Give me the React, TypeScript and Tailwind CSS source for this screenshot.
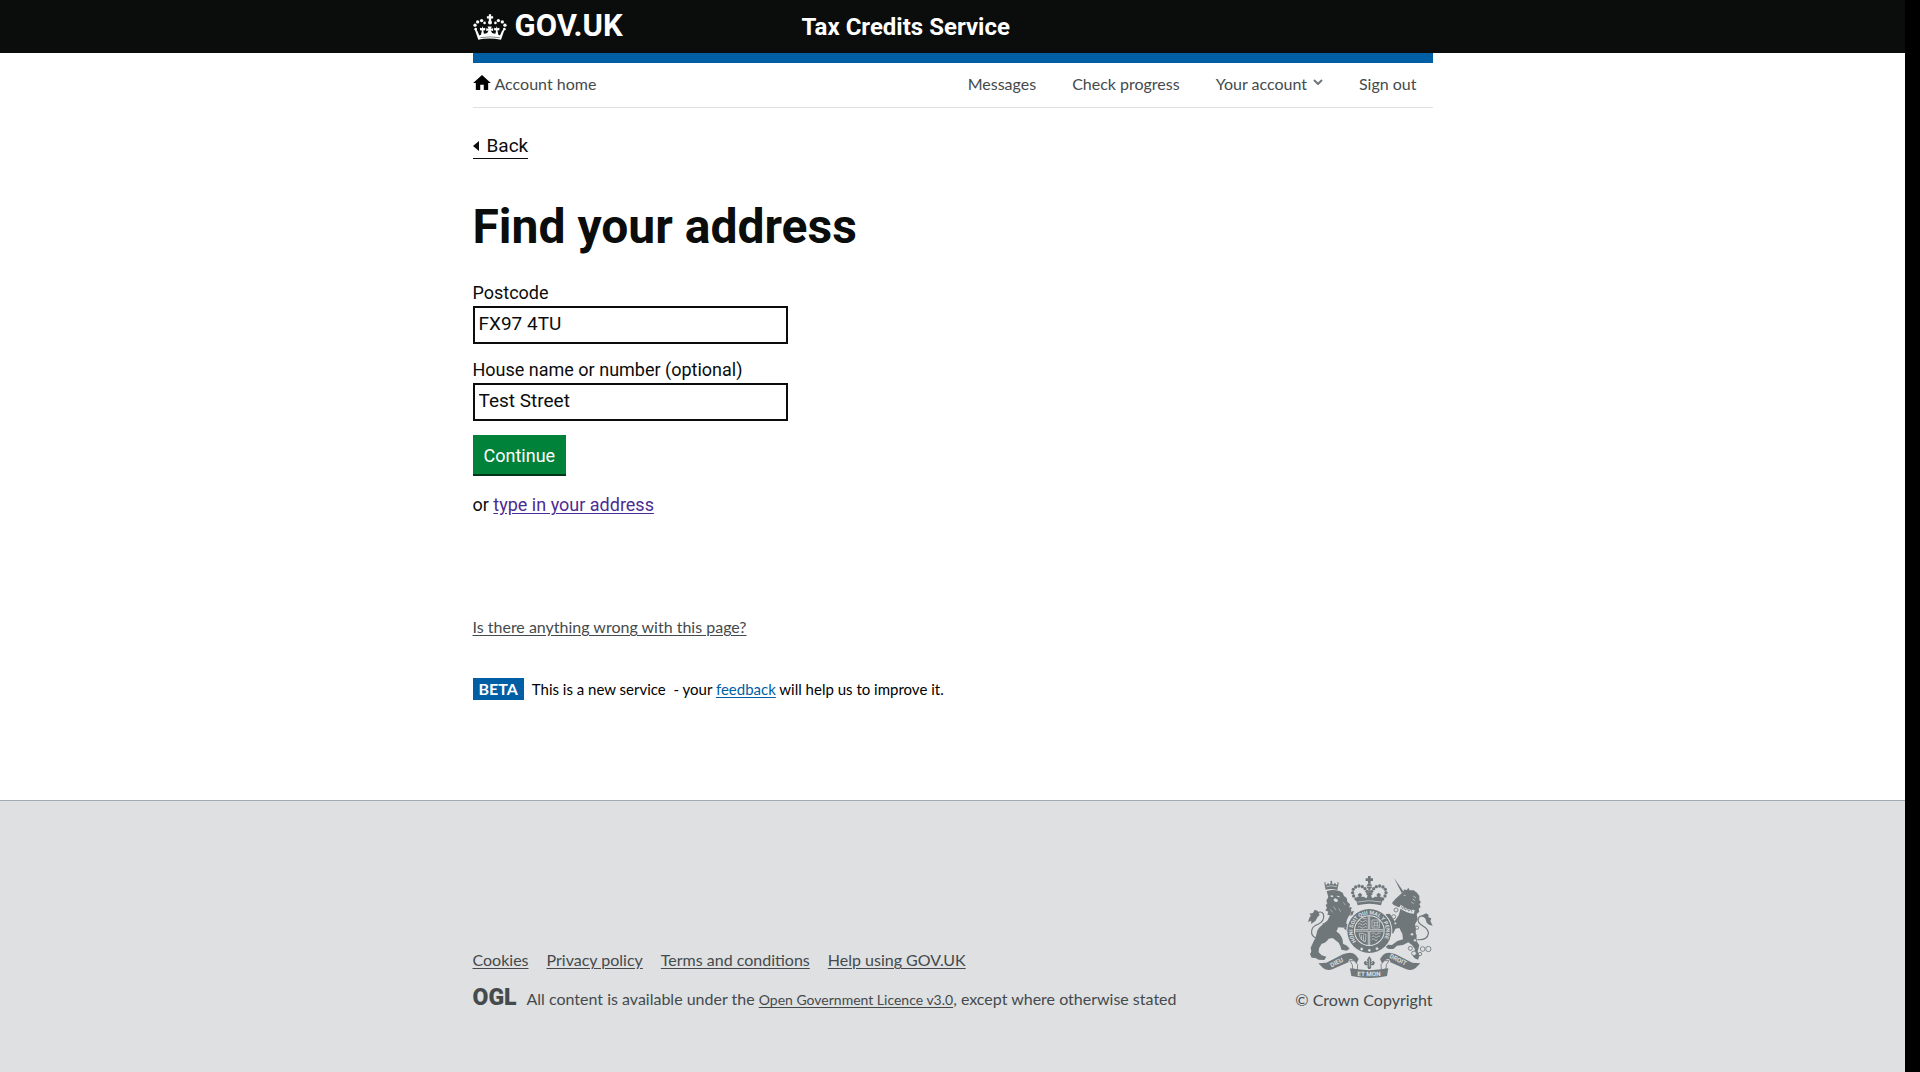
import React from 'react';
import type { ReactNode } from 'react';

function CrownLogo() {
  const left: [number, number, number][] = [
    [28, 56, 5], [36, 46, 5], [48, 42, 5], [57, 49, 4], [30, 68, 4],
  ];
  return (
    <svg viewBox="22 22 103 79" className="h-[26px] w-[34px] shrink-0" fill="#fff" aria-hidden="true">
      {left.map(([x, y, r]) => (
        <g key={`${x}-${y}`}>
          <circle cx={x} cy={y} r={r} />
          <circle cx={147 - x} cy={y} r={r} />
        </g>
      ))}
      <path d="M70 23h7v6h6v7h-6v7h-7v-7h-6v-7h6z" />
      <circle cx="73.500" cy="48" r="6" />
      <path d="M38 100l-10-29q5-2 8 4l5 12 5-2 3-13-6-1v-7l6 1 2-6 2 6 6-1v7l-6 1 2 10 5-1q7-1 9-9l-7 2v-9l7 2-3-7h13l-3 7 7-2v9l-7-2q2 8 9 9l5 1 2-10-6-1v-7l6 1 2-6 2 6 6-1v7l-6 1 3 13 5 2 5-12q3-6 8-4l-10 29q-36-7-71 0z" />
      <path d="M44 94q30-5 59 0" fill="none" stroke="#0b0c0c" strokeWidth="1.500" />
    </svg>
  );
}

function Lion() {
  return (
    <g>
      <path d="M137 92l-4-19 7 5 4-7 5 6 5-9 5 9 6-6 4 7 7-5-4 20q-20-6-35-1z" />
      <circle cx="154" cy="68" r="3" />
      <circle cx="135" cy="72" r="2.500" />
      <circle cx="174" cy="72" r="2.500" />
      <path d="M139 83q15-5 32 0" fill="none" stroke="#dee0e2" strokeWidth="2" />
      <path d="M140 97q18-8 38-1l10 5 4 10 8 6 2 11 8 8-2 9 6 9-3 12q-12 14-12 28l7 3 8 4 5 9-2 12-9-5-8-1-9-9-15-2-7 12q10 6 16 18 5 10 4 19l12 6 8 9-9 6-16-3-2-9-6-12-18-14-12 2q-9 13-21 15l-8 14-1 12 9 9 14 4-6 10-17-1-10-5-11-1-5-10 4-9-2-11 9-19q8-12 9-24 2-14 13-22l20-17 7-15-8-2 3-9-9-4 5-7-4-8 5-6-3-8 6-11z" />
      <path d="M137 200l-11-5 7-3M128 222l-12 0 5 7M112 268l-9-3 3 12M213 158l9-3-4 12-7 4zM210 143l7 5-9 4z" />
      <path d="M150 110l8-1 2 4-5 2zM170 110l7 1 3 4-7-1zM160 121l7-3 7 5-2 6-8-1z" fill="#dee0e2" />
      <path d="M160 142l8 11M176 148l6 10M151 151l7 9M190 130l6 8M194 206l-22 2" fill="none" stroke="#dee0e2" strokeWidth="1.500" />
      <path d="M121 239q-32-3-25-28 3-9 18-15 19-9 17-27-2-13-16-9-13 5-8 18" fill="none" stroke="#6f777b" strokeWidth="3.500" />
      <path d="M113 156l-9-4-5 10-11 2 5 6-4 5-5 14 10-4-1 10 13-9 7-12 6-6z" />
    </g>
  );
}

function Unicorn() {
  return (
    <g>
      <path d="M342 57l28 40-5 5z" />
      <path d="M365 103l9-12 6 3 5-8 4 8 12 0 10 7 7 10 0 12 5 7-5 5 4 9-6 5 2 9-8 7 3 17-8 14 3 12-1 14 3 7-1 16 9 14-5 18 5 15-4 10-10-4-5-6 6-21-9-13-11-8-16 8-18 2-11 10-15 0-9-7 8-6 12 1 16-12 17-5-2-16-9-18-12 2-6 14-12 1-6-8-10-14 8-8 13-2-8-14-8 4-6-8 8-9 10-1 9 12 6 11 12-18 7-24-9-1-14-7-4-5 10-12z" />
      <path d="M362 137q20 16 42 16l-2 11q-24-1-44-18z" fill="#dee0e2" />
      <path d="M364 142l4 7 5-4 3 8 6-5 4 8 6-5 4 7" fill="none" stroke="#6f777b" strokeWidth="2.500" />
      <path d="M371 109l6 0M400 112l8 4M398 120l8 5M394 129l7 5" fill="none" stroke="#dee0e2" strokeWidth="2" />
      <g fill="#dee0e2" stroke="#6f777b" strokeWidth="2.500">
        <circle cx="348" cy="153" r="6" />
        <circle cx="341" cy="173" r="6" />
        <circle cx="346" cy="193" r="4" />
        <circle cx="396" cy="226" r="5" />
        <circle cx="405" cy="244" r="5" />
        <circle cx="411" cy="206" r="5" />
        <circle cx="391" cy="268" r="6" />
        <circle cx="402" cy="283" r="7" />
        <circle cx="420" cy="285" r="5" />
        <circle cx="428" cy="270" r="7" />
        <circle cx="445" cy="270" r="8" />
      </g>
      <path d="M412 242q30 2 33-18 1-12-15-22-20-11-15-24 5-10 17-6 9 4 8 14" fill="none" stroke="#6f777b" strokeWidth="3.500" />
      <path d="M424 170l14-7 8 5-1 7 9 3-3 8 7 14-11-3-7-6-4-13z" />
    </g>
  );
}

function Ribbons() {
  return (
    <g>
      <path d="M115 313l24-2 50-25q25-10 38 2l9 12-6 13-12-11q-11-6-13 8l-48 21q-16 6-28-4z" />
      <path d="M421 313l-24-2-50-25q-25-10-38 2l-9 12 6 13 12-11q11-6 13 8l48 21q16 6 28-4z" />
      <path d="M209 305l14 0 10 12-1 16-14-3q2-14-9-25zM327 305l-14 0-10 12 1 16 14-3q-2-14 9-25z" fill="#dee0e2" stroke="#6f777b" strokeWidth="2.500" />
      <path d="M210 328q58 11 115 0l-4 23q-52 12-107 0z" />
      <path id="ribbon-left" d="M151 327l60-30" fill="none" />
      <path id="ribbon-mid" d="M210 349q58 6 116 0" fill="none" />
      <path id="ribbon-right" d="M326 295l60 30" fill="none" />
      <g fill="#dee0e2" fontFamily="Roboto, sans-serif" fontWeight="700" fontSize="19">
        <text><textPath href="#ribbon-left" startOffset="4">DIEU</textPath></text>
        <text><textPath href="#ribbon-mid" startOffset="22">ET MON</textPath></text>
        <text><textPath href="#ribbon-right" startOffset="1">DROIT</textPath></text>
      </g>
      <path d="M268 291l7 11-2 8 7-5 5 6-4 8-9 0 2 5-3 6h-6l-3-6 2-5-9 0-4-8 5-6 7 5-2-8z" />
      <path d="M268 299v24M258 311l5 3M278 311l-5 3" stroke="#dee0e2" strokeWidth="2" />
    </g>
  );
}

function RoyalCrown() {
  const beads: [number, number][] = [
    [228, 120], [221, 111], [218, 101], [220, 91], [227, 84], [237, 81], [247, 83], [255, 89], [261, 97],
  ];
  return (
    <g>
      <path d="M264 51h8v7h7v8h-7v8h-8v-8h-7v-8h7z" />
      <circle cx="268" cy="82" r="8" />
      <path d="M260 82h16" stroke="#dee0e2" strokeWidth="2" />
      {beads.map(([x, y]) => (
        <g key={`${x}-${y}`}>
          <circle cx={x} cy={y} r="5" />
          <circle cx={536 - x} cy={y} r="5" />
        </g>
      ))}
      <path d="M268 90v20" stroke="#6f777b" strokeWidth="6" strokeDasharray="5 1" />
      <path d="M228 122l4-9 5 0-4-6 7-6 7 6-4 6 8 0 8 5 4-8-6-6 11-5 11 5-6 6 4 8 8-5 8 0-4-6 7-6 7 6-4 6 5 0 4 9-5 17q-34-9-70 0z" />
      <path d="M233 129q35-8 70 0" fill="none" stroke="#dee0e2" strokeWidth="2" />
    </g>
  );
}

function Shield() {
  return (
    <g>
      <circle cx="268" cy="216" r="69" fill="#dee0e2" />
      <circle cx="268" cy="216" r="66" />
      <circle cx="268" cy="215" r="46" fill="#dee0e2" />
      <circle cx="268" cy="215" r="43" />
      <path d="M267 172v86M225 214h86" fill="none" stroke="#dee0e2" strokeWidth="7" />
      <path d="M267 172v86M225 214h86" fill="none" stroke="#6f777b" strokeWidth="2.500" />
      <g fill="none" stroke="#dee0e2" strokeWidth="2">
        <path d="M234 187q5-5 9 0t9 0 9 0M234 196q5-5 9 0t9 0 9 0M234 205q5-5 9 0t9 0 9 0M247 179h13" />
        <path d="M276 183h22v24h-22zM281 202l3-8-3-5 7 3 6-4-3 7 3 7-7-3z" />
        <path d="M238 223q0 20 18 26l2-22-8-3zM244 228l1 14M250 228l1 18" />
        <path d="M275 224q5-5 9 0t9 0 9 0M275 233q5-5 9 0t9 0 7 0M275 242q5-5 9 0t9 0" />
      </g>
      <path id="garter" d="M233 252a50 50 0 1 1 70 0" fill="none" />
      <text fill="#dee0e2" fontFamily="Roboto, sans-serif" fontWeight="700" fontSize="16">
        <textPath href="#garter" startOffset="6">HONI SOIT QUI MAL Y PENSE</textPath>
      </text>
      <path d="M245 265l5 5-5 5-5-5zM268 269l5 5-5 5-5-5zM291 264l5 5-5 5-5-5z" fill="#dee0e2" />
    </g>
  );
}

function RoyalArms() {
  return (
    <svg viewBox="84 51 375 306" className="h-[102px] w-[125px]" fill="#6f777b" aria-label="Royal coat of arms">
      <Ribbons />
      <Lion />
      <Unicorn />
      <Shield />
      <RoyalCrown />
    </svg>
  );
}

function HomeIcon() {
  return (
    <svg viewBox="2 3 20 17" className="mb-1 h-[15px] w-[18px]" fill="#000" aria-hidden="true">
      <path d="M10 20v-6h4v6h5v-8h3L12 3 2 12h3v8z" />
    </svg>
  );
}

function Chevron() {
  return (
    <svg viewBox="0 0 10 6" className="mb-1 h-[6px] w-[10px]" fill="none" stroke="#6f777b" strokeWidth="2" aria-hidden="true">
      <path d="M1 1l4 4 4-4" />
    </svg>
  );
}

function Field({ id, label, value }: { id: string; label: string; value: string }) {
  return (
    <div className="mb-3.5">
      <label htmlFor={id} className="mb-px block text-lg leading-6">{label}</label>
      <input
        id={id}
        type="text"
        defaultValue={value}
        className="block h-[38px] w-full max-w-[315px] border-2 border-[#0b0c0c] bg-white px-1 pb-1 text-[19px] text-[#0b0c0c]"
      />
    </div>
  );
}

function FooterLink({ children }: { children: ReactNode }) {
  return <li><a href="#" className="underline underline-offset-2">{children}</a></li>;
}

export default function App() {
  return (
    <div className="min-h-screen bg-black pr-[15px] font-[Roboto,sans-serif] text-[#0b0c0c]">
      <div className="flex min-h-screen flex-col bg-white">
        <header className="bg-[#0b0c0c]">
          <div className="mx-auto flex h-[53px] max-w-[960px] items-center font-bold text-white">
            <a href="#" className="flex w-[329px] shrink-0 items-center gap-2 text-[31px]">
              <CrownLogo />
              GOV.UK
            </a>
            <a href="#" className="text-2xl">Tax Credits Service</a>
          </div>
        </header>

        <div className="mx-auto w-full max-w-[960px]">
          <div className="h-2.5 bg-[#005ea5]" />
          <nav className="flex h-[45px] items-center justify-between border-b border-[#dee0e2] pr-4 pb-0.5 font-[Lato,sans-serif] text-base leading-5 text-[#454a4c]">
            <a href="#" className="flex items-center gap-1"><HomeIcon />Account home</a>
            <ul className="flex gap-9">
              <li><a href="#">Messages</a></li>
              <li><a href="#">Check progress</a></li>
              <li><button type="button" className="flex items-center gap-1.5">Your account <Chevron /></button></li>
              <li><a href="#">Sign out</a></li>
            </ul>
          </nav>

          <main>
            <a href="#" className="mt-[26px] flex w-fit items-center gap-2 border-b border-[#0b0c0c] text-[19px] leading-6">
              <svg viewBox="0 0 6 10" className="h-2.5 w-1.5" fill="#0b0c0c" aria-hidden="true"><path d="M6 0v10L0 5z" /></svg>
              Back
            </a>
            <h1 className="mt-[43px] mb-[29px] text-5xl leading-[50px] font-bold">Find your address</h1>
            <form>
              <Field id="postcode" label="Postcode" value="FX97 4TU" />
              <Field id="house" label="House name or number (optional)" value="Test Street" />
              <button type="button" className="mb-0.5 block bg-[#00823b] px-[11px] pt-[9px] pb-1.5 text-lg leading-6 text-white shadow-[0_2px_0_#003618]">Continue</button>
            </form>
            <p className="mt-[19px] text-lg leading-6">
              or <a href="#" className="text-[#4c2c92] underline underline-offset-2">type in your address</a>
            </p>
            <p className="mt-[100px] font-[Lato,sans-serif] text-base leading-5 text-[#454a4c]">
              <a href="#" className="underline underline-offset-2">Is there anything wrong with this page?</a>
            </p>
            <p className="mt-[41px] mb-[100px] flex items-center gap-2 font-[Lato,sans-serif] text-[15px] leading-[22px]">
              <strong className="bg-[#005ea5] px-1.5 text-base leading-[22px] font-bold text-white">BETA</strong>
              <span className="whitespace-pre-wrap text-black">This is a new service  - your <a href="#" className="text-[#005ea5] underline underline-offset-2">feedback</a> will help us to improve it.</span>
            </p>
          </main>
        </div>

        <footer className="flex-1 border-t border-[#a1acb2] bg-[#dee0e2] font-[Lato,sans-serif] text-base leading-5 text-[#454a4c]">
          <div className="mx-auto flex max-w-[960px] items-end justify-between pt-[75px] pb-[60px]">
            <div>
              <ul className="mb-[18px] flex gap-[18px]">
                <FooterLink>Cookies</FooterLink>
                <FooterLink>Privacy policy</FooterLink>
                <FooterLink>Terms and conditions</FooterLink>
                <FooterLink>Help using GOV.UK</FooterLink>
              </ul>
              <div className="flex items-baseline gap-2.5">
                <span className="font-[Roboto,sans-serif] text-[23px] leading-5 font-black">OGL</span>
                <p>
                  All content is available under the <a href="#" className="text-sm underline underline-offset-2">Open Government Licence v3.0</a>, except where otherwise stated
                </p>
              </div>
            </div>
            <a href="#" className="flex flex-col items-end gap-3">
              <RoyalArms />
              © Crown Copyright
            </a>
          </div>
        </footer>
      </div>
    </div>
  );
}
